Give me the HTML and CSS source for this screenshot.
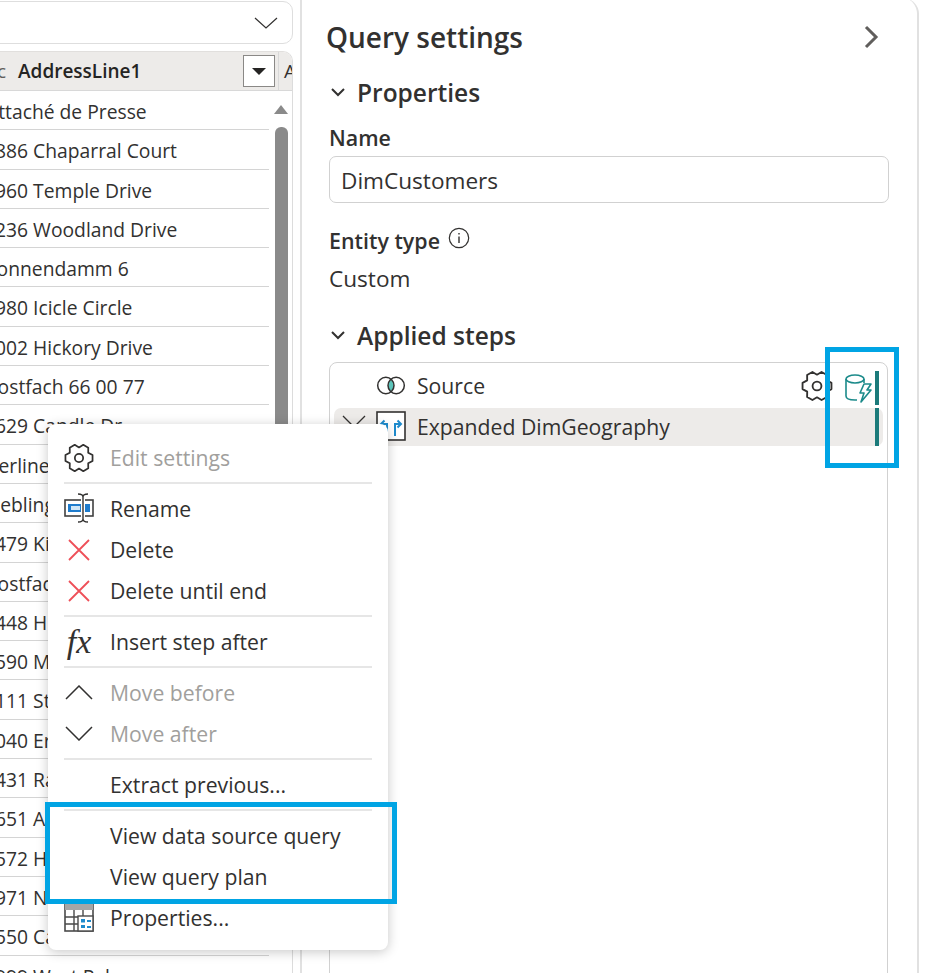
FILE: index.html
```html
<!DOCTYPE html>
<html lang="en">

<head>
    <meta charset="UTF-8">
    <title>Query settings</title>
    <link rel="stylesheet" href="styles.css">
</head>

<body>
    <svg class="defs" width="0" height="0">
        <symbol id="gear" viewBox="-13 -13 26 26">
            <polygon fill="none" stroke="#323130" stroke-width="1.5" stroke-linejoin="round"
                points="11.74,-2.5 11.74,2.5 7.97,4.6 8.03,8.92 3.71,11.41 0,9.2 -3.71,11.41 -8.03,8.92 -7.97,4.6 -11.74,2.5 -11.74,-2.5 -7.97,-4.6 -8.03,-8.92 -3.71,-11.41 0,-9.2 3.71,-11.41 8.03,-8.92 7.97,-4.6" />
            <circle r="3.6" fill="none" stroke="#323130" stroke-width="1.5" />
        </symbol>
        <symbol id="cross" viewBox="0 0 24 24">
            <path d="M2 2 L22 22 M22 2 L2 22" fill="none" stroke="#ee4f58" stroke-width="1.8" />
        </symbol>
    </svg>

    <div class="page">
        <div class="data-col">
            <div class="picker">
                <svg class="picker-chevron" width="24" height="12" viewBox="0 0 24 12">
                    <path d="M1 1 L12 11 L23 1" fill="none" stroke="#323130" stroke-width="1.2" />
                </svg>
            </div>
            <div class="grid-card">
                <div class="grid-head">
                    <span class="type-c">c</span>
                    <span class="head-name">AddressLine1</span>
                    <span class="filter-btn"><span class="filter-arrow"></span></span>
                    <span class="head-next">A</span>
                </div>
                <div class="grid-body">
                    <div class="rows">
                        <div class="row">Attaché de Presse</div>
                        <div class="row row-num">3886 Chaparral Court</div>
                        <div class="row row-num">7960 Temple Drive</div>
                        <div class="row row-num">6236 Woodland Drive</div>
                        <div class="row">Sonnendamm 6</div>
                        <div class="row row-num">5980 Icicle Circle</div>
                        <div class="row row-num">1002 Hickory Drive</div>
                        <div class="row">Postfach 66 00 77</div>
                        <div class="row row-num">8629 Candle Dr</div>
                        <div class="row">Berliner</div>
                        <div class="row">Hebling</div>
                        <div class="row row-num">5479 Ki</div>
                        <div class="row">Postfac</div>
                        <div class="row row-num">4448 H</div>
                        <div class="row row-num">5590 M</div>
                        <div class="row row-num">6111 St</div>
                        <div class="row row-num">5040 Er</div>
                        <div class="row row-num">1431 Ra</div>
                        <div class="row row-num">7651 Al</div>
                        <div class="row row-num">2572 H</div>
                        <div class="row row-num">9971 No</div>
                        <div class="row row-num">8550 Ca</div>
                        <div class="row row-num">9999 West Pal</div>
                    </div>
                    <div class="scroll">
                        <span class="scroll-up"></span>
                        <span class="scroll-thumb"></span>
                    </div>
                </div>
            </div>
        </div>

        <div class="settings">
            <div class="settings-title">
                <h1>Query settings</h1>
                <svg width="18" height="24" viewBox="0 0 18 24">
                    <path d="M3 2 L13 12 L3 22" fill="none" stroke="#605e5c" stroke-width="3" />
                </svg>
            </div>

            <div class="section-head">
                <svg width="14" height="9" viewBox="0 0 14 9">
                    <path d="M1 1 L7 7 L13 1" fill="none" stroke="#323130" stroke-width="2" />
                </svg>
                <h2>Properties</h2>
            </div>

            <div class="field-label name-label">Name</div>
            <div class="name-input">DimCustomers</div>

            <div class="field-label entity-label">
                Entity type
                <svg class="info-icon" width="22" height="22" viewBox="0 0 22 22">
                    <circle cx="11" cy="11" r="9.7" fill="none" stroke="#323130" stroke-width="1.2" />
                    <path d="M11 9.5 V16 M11 6 V7.6" stroke="#323130" stroke-width="1.4" />
                </svg>
            </div>
            <div class="entity-value">Custom</div>

            <div class="section-head steps-head">
                <svg width="14" height="9" viewBox="0 0 14 9">
                    <path d="M1 1 L7 7 L13 1" fill="none" stroke="#323130" stroke-width="2" />
                </svg>
                <h2>Applied steps</h2>
            </div>

            <div class="steps">
                <div class="step step-first">
                    <svg class="step-chevron" width="24" height="13" viewBox="0 0 24 13"></svg>
                    <svg class="step-icon" width="30" height="19" viewBox="0 0 32 20">
                        <path d="M16 3.5 A8.7 8.7 0 0 1 16 16.5 A8.7 8.7 0 0 1 16 3.5" fill="#5cc4ba" />
                        <circle cx="10.5" cy="10" r="8.7" fill="none" stroke="#323130" stroke-width="1.6" />
                        <circle cx="21.5" cy="10" r="8.7" fill="none" stroke="#323130" stroke-width="1.6" />
                    </svg>
                    <span class="step-name">Source</span>
                    <svg class="step-gear" width="32" height="32"><use href="#gear" /></svg>
                    <svg class="step-db" width="30" height="30" viewBox="0 0 30 30">
                        <ellipse cx="11" cy="6" rx="9" ry="4" fill="none" stroke="#1b8a8a" stroke-width="1.6" />
                        <path d="M2 6 V23 C2 26 7 27 11 27 L13 27 M20 6 V10" fill="none" stroke="#1b8a8a" stroke-width="1.6" />
                        <path d="M20 11 H27 L23 17 H27 L17 29 L20 20 H16 Z" fill="#fff" stroke="#1b8a8a" stroke-width="1.6" stroke-linejoin="round" />
                    </svg>
                    <span class="step-bar"></span>
                </div>
                <div class="step step-selected">
                    <svg class="step-chevron" width="24" height="13" viewBox="0 0 24 13">
                        <path d="M1 1 L12 12 L23 1" fill="none" stroke="#323130" stroke-width="1.3" />
                    </svg>
                    <svg class="step-icon" width="30" height="30" viewBox="0 0 30 30">
                        <rect x="1" y="1" width="28" height="28" fill="#fff" stroke="#323130" stroke-width="1.6" />
                        <path d="M11 25 V13 H5 M8.5 9.5 L5 13 L8.5 16.5 M19 25 V13 H25 M21.5 9.5 L25 13 L21.5 16.5" fill="none" stroke="#1e8bcd" stroke-width="2" />
                    </svg>
                    <span class="step-name">Expanded DimGeography</span>
                    <span class="step-bar"></span>
                </div>
            </div>
        </div>
    </div>

    <div class="menu">
        <div class="menu-item disabled">
            <svg class="menu-icon" width="30" height="30"><use href="#gear" /></svg>
            <span>Edit settings</span>
        </div>
        <div class="menu-sep"></div>
        <div class="menu-item">
            <svg class="menu-icon" width="30" height="30" viewBox="0 0 30 30">
                <rect x="1" y="7" width="28" height="16" fill="#fff" stroke="#404040" stroke-width="1.6" />
                <rect x="4" y="11" width="22" height="8" fill="#1e7ccd" />
                <rect x="7" y="13" width="9" height="4" fill="#cfe6f7" />
                <rect x="17" y="4" width="4" height="22" fill="#fff" />
                <path d="M14 1 C17 1 19 2 19 4 V26 C19 28 17 29 14 29 M24 1 C21 1 19 2 19 4 M24 29 C21 29 19 28 19 26" fill="none" stroke="#323130" stroke-width="1.4" />
            </svg>
            <span>Rename</span>
        </div>
        <div class="menu-item">
            <svg class="menu-icon cross" width="24" height="24"><use href="#cross" /></svg>
            <span>Delete</span>
        </div>
        <div class="menu-item">
            <svg class="menu-icon cross" width="24" height="24"><use href="#cross" /></svg>
            <span>Delete until end</span>
        </div>
        <div class="menu-sep"></div>
        <div class="menu-item">
            <span class="menu-icon fx">fx</span>
            <span>Insert step after</span>
        </div>
        <div class="menu-sep"></div>
        <div class="menu-item disabled">
            <svg class="menu-icon arrow" width="28" height="15" viewBox="0 0 28 15">
                <path d="M1 14 L14 1 L27 14" fill="none" stroke="#323130" stroke-width="1.5" />
            </svg>
            <span>Move before</span>
        </div>
        <div class="menu-item disabled">
            <svg class="menu-icon arrow" width="28" height="15" viewBox="0 0 28 15">
                <path d="M1 1 L14 14 L27 1" fill="none" stroke="#323130" stroke-width="1.5" />
            </svg>
            <span>Move after</span>
        </div>
        <div class="menu-sep"></div>
        <div class="menu-item">
            <span class="menu-icon"></span>
            <span>Extract previous...</span>
        </div>
        <div class="menu-sep"></div>
        <div class="menu-item">
            <span class="menu-icon"></span>
            <span>View data source query</span>
        </div>
        <div class="menu-item">
            <span class="menu-icon"></span>
            <span>View query plan</span>
        </div>
        <div class="menu-item">
            <svg class="menu-icon" width="30" height="30" viewBox="0 0 30 30">
                <rect x="1" y="1" width="28" height="28" fill="#fff" stroke="#4a4a4a" stroke-width="1.6" />
                <rect x="1" y="1" width="28" height="7" fill="#a6a6a6" />
                <path d="M1 15 H14 M1 22 H14 M10 8 V29 M19 8 V14" stroke="#4a4a4a" stroke-width="1.4" />
                <rect x="14" y="14" width="15" height="15" fill="#fff" stroke="#4a4a4a" stroke-width="1.4" />
                <path d="M17 17 H21 V20.5 H17 Z M17 23 H21 V26 H17 Z" fill="#1e8bcd" />
                <path d="M23 18 H27 V20 H23 Z M23 24 H27 V26 H23 Z" fill="#1e8bcd" />
            </svg>
            <span>Properties...</span>
        </div>
    </div>

    <div class="callout callout-menu"></div>
    <div class="callout callout-steps"></div>
</body>

</html>
```

FILE: styles.css
```css
body {
    margin: 0;
    font-family: "Open Sans", "Noto Sans", sans-serif;
    color: #323130;
    background-color: white;
}

h1,
h2 {
    margin: 0;
    font-weight: 600;
}

.defs {
    position: absolute;
}

.page {
    display: flex;
    width: 925px;
    height: 973px;
    overflow: hidden;
}

/* left column with the data preview */
.data-col {
    width: 293px;
    flex: none;
}

.picker {
    display: flex;
    align-items: center;
    justify-content: flex-end;
    height: 41px;
    margin: 1px 0 7px -12px;
    padding-right: 14px;
    border: 1px solid #dedede;
    border-radius: 10px;
}

.grid-card {
    height: 930px;
    border-top: 1px solid #e1dfdd;
    border-right: 1px solid #dcdcdc;
    border-radius: 0 10px 0 0;
    overflow: hidden;
}

.grid-head {
    display: flex;
    align-items: center;
    height: 38px;
    background-color: #edebe9;
    border-bottom: 1px solid #d8d8d8;
    font-size: 19px;
    font-weight: 600;
    overflow: hidden;
}

.type-c {
    width: 18px;
    flex: none;
    font-weight: 400;
    color: #605e5c;
    text-indent: -3px;
}

.head-name {
    width: 225px;
    flex: none;
    color: #252423;
}

.filter-btn {
    display: flex;
    align-items: center;
    justify-content: center;
    width: 30px;
    height: 30px;
    flex: none;
    background-color: white;
    border: 1px solid #8a8886;
}

.filter-arrow {
    width: 0;
    height: 0;
    border-left: 7px solid transparent;
    border-right: 7px solid transparent;
    border-top: 7px solid #252423;
}

.head-next {
    height: 38px;
    margin-left: 3px;
    padding-left: 5px;
    border-left: 1px solid #d8d8d8;
    font-weight: 400;
    line-height: 38px;
}

.grid-body {
    display: flex;
}

.rows {
    width: 269px;
    flex: none;
    overflow: hidden;
}

.row {
    height: 38.3px;
    border-bottom: 1px solid #d4d4d4;
    font-size: 19.3px;
    line-height: 42px;
    text-indent: -14px;
    white-space: nowrap;
}

.row-num {
    text-indent: -16px;
}

.scroll {
    display: flex;
    flex-direction: column;
    align-items: center;
    width: 14px;
    margin-left: 5px;
    padding-top: 14px;
}

.scroll-up {
    width: 0;
    height: 0;
    border-left: 7px solid transparent;
    border-right: 7px solid transparent;
    border-bottom: 9px solid #8a8a8a;
}

.scroll-thumb {
    width: 13px;
    height: 600px;
    margin-top: 13px;
    background-color: #8a8a8a;
    border-radius: 6px;
}

/* right panel */
.settings {
    width: 588px;
    height: 990px;
    flex: none;
    margin: -2px 0 0 7px;
    padding-left: 27px;
    border-left: 2px solid #e1e1e1;
    border-right: 2px solid #e1e1e1;
    border-radius: 0 16px 0 0;
}

.settings-title {
    display: flex;
    align-items: center;
    justify-content: space-between;
    height: 36px;
    margin: 21px 36px 0 -3px;
}

.settings-title h1 {
    font-size: 28px;
}

.section-head {
    display: flex;
    align-items: center;
    gap: 12px;
    height: 32px;
    margin: 21px 0 0 2px;
}

.section-head h2 {
    font-size: 24.5px;
}

.field-label {
    font-size: 21.4px;
    font-weight: 600;
}

.name-label {
    height: 28px;
    margin-top: 16px;
    line-height: 28px;
}

.name-input {
    width: 547px;
    height: 45px;
    margin-top: 4px;
    padding-left: 11px;
    border: 1px solid #d1d1d1;
    border-radius: 7px;
    font-size: 22.6px;
    line-height: 47px;
}

.entity-label {
    display: flex;
    align-items: center;
    gap: 8px;
    height: 28px;
    margin-top: 23px;
}

.info-icon {
    margin-top: -4px;
}

.entity-value {
    height: 30px;
    margin-top: 9px;
    font-size: 22.6px;
    line-height: 32px;
}

.steps-head {
    margin-top: 26px;
}

.steps {
    width: 549px;
    height: 640px;
    margin-top: 11px;
    padding: 7px 4px 0 4px;
    border: 1px solid #d1d1d1;
    border-radius: 8px;
}

.step {
    display: flex;
    align-items: center;
    height: 38px;
    position: relative;
    font-size: 21.2px;
    border-radius: 7px;
}

.step-first {
    box-sizing: border-box;
    padding-bottom: 8px;
}

.step-selected {
    box-sizing: border-box;
    padding-bottom: 2px;
    background-color: #edebe9;
}

.step-chevron {
    width: 24px;
    margin-left: 8px;
    flex: none;
}

.step-selected .step-chevron {
    align-self: flex-start;
    margin-top: 7px;
}

.step-icon {
    width: 30px;
    margin-left: 10px;
    margin-right: 11px;
    flex: none;
}

.step-name {
    white-space: nowrap;
}

.step-gear {
    position: absolute;
    left: 467px;
    top: 0;
}

.step-db {
    position: absolute;
    left: 510px;
    top: 3px;
}

.step-bar {
    position: absolute;
    left: 541px;
    top: 1px;
    bottom: 3px;
    width: 4px;
    background-color: #1b7a7a;
}

.step-selected .step-bar {
    top: 0;
    bottom: 0;
}

/* context menu sits on top of both columns */
.menu {
    position: absolute;
    left: 48px;
    top: 424px;
    width: 340px;
    padding: 13px 0 12px;
    background-color: white;
    border-radius: 8px;
    box-shadow: 0 2px 12px rgba(0, 0, 0, 0.22);
    font-size: 21.2px;
}

.menu-item {
    display: flex;
    align-items: center;
    height: 41.15px;
    padding-left: 16px;
}

.menu-item.disabled {
    color: #a19f9d;
}

.menu-icon {
    width: 30px;
    margin-right: 16px;
    flex: none;
}

.menu-icon.cross {
    width: 24px;
    margin-left: 3px;
    margin-right: 19px;
}

.menu-icon.arrow {
    width: 28px;
    margin-left: 1px;
    margin-right: 17px;
}

.menu-icon.fx {
    font-family: "Liberation Serif", serif;
    font-size: 34px;
    font-style: italic;
    line-height: 41px;
    color: #323130;
    text-align: center;
}

.menu-sep {
    height: 2px;
    margin: 4px 16px 3.7px;
    background-color: #e6e6e6;
}

/* blue annotation frames drawn over the screenshot */
.callout {
    position: absolute;
    box-sizing: border-box;
    border: 5px solid #00a4e4;
}

.callout-menu {
    left: 45px;
    top: 802px;
    width: 352px;
    height: 102px;
}

.callout-steps {
    left: 825px;
    top: 347px;
    width: 74px;
    height: 121px;
}
```
